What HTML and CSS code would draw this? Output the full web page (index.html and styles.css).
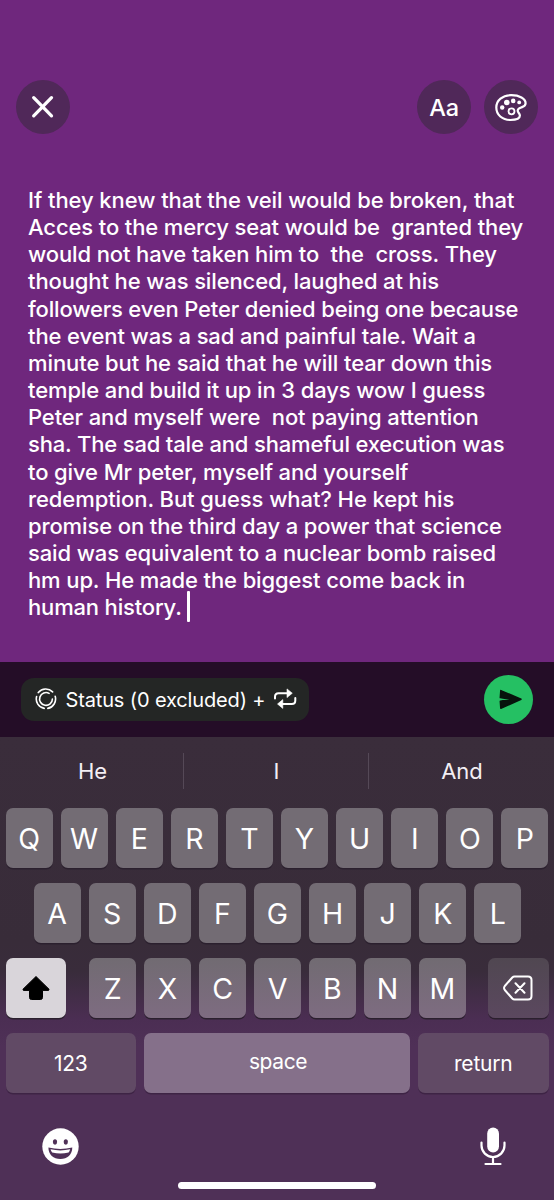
FILE: index.html
```html
<!DOCTYPE html>
<html lang="en">
<head>
<meta charset="utf-8">
<title>Text status</title>
<link rel="stylesheet" href="styles.css">
</head>
<body>
<main class="screen">
  <header class="toolbar">
    <button class="round" aria-label="Close"><svg width="54" height="54" viewBox="0 0 54 54"><path d="M17.7 17.7 35.5 35.8M35.5 17.7 17.7 35.8" fill="none" stroke="#fff" stroke-width="3.3" stroke-linecap="round"/></svg></button>
    <div class="tools">
      <button class="round font-btn">Aa</button>
      <button class="round" aria-label="Colour"><svg width="54" height="54" viewBox="0 0 54 54"><path d="M27.2 15.2C18.5 15.2 12.3 20.4 12.3 27.6c0 7.3 6 12.4 14 12.4 5.600 0 9.600-1.700 9.600-4.400 0-2.200-2.200-3-2.200-5 0-2.300 1.900-2.600 4.300-3.500 2.200-.8 3.600-2 3.600-3.900 0-4.600-6.100-8-14.400-8Z" fill="none" stroke="#fff" stroke-width="2.200"/><g fill="#fff"><circle cx="18.200" cy="27.500" r="2.200"/><circle cx="22.800" cy="22.500" r="2.800"/><circle cx="29.200" cy="20.900" r="2.300"/><circle cx="35.200" cy="22.400" r="1.900"/></g><circle cx="27.500" cy="31.300" r="3" fill="none" stroke="#fff" stroke-width="1.800"/></svg></button>
    </div>
  </header>

  <section class="editor">
    <p class="message">
      <span class="line loose">If they knew that the veil would be broken, that</span>
      <span class="line">Acces to the mercy seat would be  granted they</span>
      <span class="line">would not have taken him to  the  cross. They</span>
      <span class="line">thought he was silenced, laughed at his</span>
      <span class="line tight">followers even Peter denied being one because</span>
      <span class="line">the event was a sad and painful tale. Wait a</span>
      <span class="line loose">minute but he said that he will tear down this</span>
      <span class="line">temple and build it up in 3 days wow I guess</span>
      <span class="line">Peter and myself were  not paying attention</span>
      <span class="line tight">sha. The sad tale and shameful execution was</span>
      <span class="line">to give Mr peter, myself and yourself</span>
      <span class="line loose">redemption. But guess what? He kept his</span>
      <span class="line">promise on the third day a power that science</span>
      <span class="line">said was equivalent to a nuclear bomb raised</span>
      <span class="line">hm up. He made the biggest come back in</span>
      <span class="line tight">human history.<i class="caret"></i></span>
    </p>
  </section>

  <section class="audience">
    <button class="pill">
      <svg width="22" height="22" viewBox="0 0 22 22" fill="none" stroke="#fff" stroke-width="1.600" stroke-linecap="round"><path d="M3.300 4.600A9.600 9.600 0 0 1 17.600 3.900M20.200 8.300A9.600 9.600 0 0 1 12.800 20.400M9.200 20.400A9.600 9.600 0 0 1 1.600 8.500"/><path d="M14.100 5.400A6.400 6.400 0 1 0 17.400 11"/></svg>
      <span class="pill-text">Status (0 excluded) +</span>
      <svg width="24" height="22" viewBox="0 0 24 22"><path d="M2 10.500V8.700Q2 5.200 5.500 5.200H15M22.300 10V12.500Q22.300 16 18.800 16H9" fill="none" stroke="#fff" stroke-width="2" stroke-linecap="round"/><path d="M14 .9 19.300 5.200 14 9.600ZM9.800 11.600 4.500 16 9.800 20.400Z" fill="#fff" stroke="#fff" stroke-width=".6" stroke-linejoin="round"/></svg>
    </button>
    <button class="send" aria-label="Send"><svg width="49" height="49" viewBox="0 0 49 49"><path d="M16.800 15.600 37 24.200 16.800 33.300 16.300 26.200 26.500 24.300 16.300 22.600Z" fill="#07130c" stroke="#07130c" stroke-width="1.500" stroke-linejoin="round"/></svg></button>
  </section>

  <section class="keyboard">
    <div class="suggestions"><span>He</span><span>I</span><span>And</span></div>
    <div class="rows">
      <div class="row"><b class="key">Q</b><b class="key">W</b><b class="key">E</b><b class="key">R</b><b class="key">T</b><b class="key">Y</b><b class="key">U</b><b class="key">I</b><b class="key">O</b><b class="key">P</b></div>
      <div class="row middle"><b class="key">A</b><b class="key">S</b><b class="key">D</b><b class="key">F</b><b class="key">G</b><b class="key">H</b><b class="key">J</b><b class="key">K</b><b class="key">L</b></div>
      <div class="row lower">
        <b class="key shift"><svg width="30" height="26" viewBox="0 0 30 26"><path d="M15 1.500 28 14.200Q28.500 15.300 27 15.400H21.500V22.500Q21.500 24.500 19.500 24.500H10.500Q8.500 24.500 8.500 22.500V15.400H3Q1.500 15.300 2 14.200Z" fill="#000" stroke="#000" stroke-linejoin="round"/></svg></b>
        <div class="letters"><b class="key">Z</b><b class="key">X</b><b class="key">C</b><b class="key">V</b><b class="key">B</b><b class="key">N</b><b class="key">M</b></div>
        <b class="key dark delete"><svg width="30" height="26" viewBox="0 0 30 26" fill="none" stroke="#fff" stroke-width="2" stroke-linecap="round" stroke-linejoin="round"><path d="M11.500 1.500H25Q28.500 1.500 28.500 5V21Q28.500 24.500 25 24.500H11.500Q10.300 24.500 9.300 23.500L1.800 15Q.3 13 1.800 11L9.300 2.500Q10.300 1.500 11.500 1.500ZM12.500 8.300 21.500 17.700M21.500 8.300 12.500 17.700"/></svg></b>
      </div>
      <div class="row bottom"><b class="key dark word">123</b><b class="key word space">space</b><b class="key dark word">return</b></div>
    </div>
    <div class="dock">
      <svg width="37" height="37" viewBox="0 0 37 37"><circle cx="18.500" cy="18.500" r="18.200" fill="#fff"/><g fill="#4f3057"><ellipse cx="13" cy="14" rx="2.100" ry="2.700"/><ellipse cx="23.800" cy="14" rx="2.100" ry="2.700"/><path d="M6.400 19.500Q18.400 22.300 30.300 19.500C30.300 26.500 25.300 31 18.400 31S6.400 26.500 6.400 19.500Z"/></g><path d="M8.500 21.300Q18.400 23.600 28.200 21.300 27.500 23.600 26.600 24.500 18.400 26.400 10.200 24.500 9 23 8.500 21.300Z" fill="#fff"/></svg>
      <svg width="26" height="39" viewBox="0 0 26 39"><rect x="7.200" y=".5" width="11.800" height="25" rx="5.900" fill="#fff"/><path d="M1.500 15.500V18.500a11.500 11.500 0 0 0 23 0V15.500M13 30V37M5.500 37H20.500" fill="none" stroke="#fff" stroke-width="2.200" stroke-linecap="round"/></svg>
    </div>
    <div class="home"></div>
  </section>
</main>
</body>
</html>
```

FILE: styles.css
```css
* { box-sizing: border-box; }
body { margin: 0; background: #6f277d; font-family: Inter, "Liberation Sans", sans-serif; color: #fff; }
button { border: 0; padding: 0; margin: 0; color: inherit; font: inherit; }
svg { display: block; flex: none; }
.screen { width: 554px; height: 1200px; display: flex; flex-direction: column; overflow: hidden; background: #6f277d; }

.toolbar { display: flex; justify-content: space-between; padding: 80px 16px 0; height: 186px; }
.tools { display: flex; gap: 13px; height: 54px; }
.round { width: 54px; height: 54px; border-radius: 50%; background: #502859; display: flex; align-items: center; justify-content: center; }
.toolbar .font-btn { font-size: 23.500px; font-weight: 450; letter-spacing: -.2px; }

.editor { height: 475.500px; padding: 1px 0 0 28px; }
.message { margin: 0; font-size: 22px; font-weight: 500; line-height: 27.150px; letter-spacing: -.12px; }
.line { display: block; white-space: pre; }
.loose { letter-spacing: -.08px; }
.tight { letter-spacing: -.17px; }
.caret { display: inline-block; width: 3px; height: 31px; margin: -13px 0 -8px 5px; vertical-align: 1px; border-radius: 1px; background: #fff; }

.audience { height: 75.500px; padding: 0 21px; display: flex; align-items: center; justify-content: space-between; background: #240d27; }
.pill { width: 288px; height: 43px; padding: 0 12px 0 14px; border-radius: 13px; background: #242625; display: flex; align-items: center; }
.pill-text { flex: 1; margin-left: 8.500px; padding-top: 2px; text-align: left; font-size: 20px; letter-spacing: -.14px; white-space: nowrap; }
.send { width: 49px; height: 49px; border-radius: 50%; background: #25c063; }

.keyboard { height: 463px; background: linear-gradient(#3a2d3b 0, #382c39 205px, #392c3b 235px, #4b2e53 282px, #4f3057 310px, #4f3057 100%); }
.suggestions { height: 70.500px; padding-top: 16px; display: grid; grid-template-columns: 183px 185px 186px; }
.suggestions span { height: 36px; display: flex; align-items: center; justify-content: center; font-size: 22px; color: #f3eff4; }
.suggestions span:first-child { padding-left: 2px; }
.suggestions span + span { border-left: 1px solid #554957; padding-left: 1px; }
.rows { display: flex; flex-direction: column; gap: 15px; padding: 0 5.500px; }
.row { height: 60px; display: flex; gap: 8px; }
.middle { padding: 0 27px 0 28px; }
.key { flex: 1; height: 60px; padding-top: 1px; border-radius: 7px; background: #736c74; box-shadow: 0 1.500px 0 #2b202e; display: flex; align-items: center; justify-content: center; font-weight: 400; font-size: 28.500px; }
.lower { justify-content: space-between; gap: 0; }
.letters { display: flex; gap: 8.200px; width: 376.500px; margin-left: 1px; }
.lower .letters .key { background: linear-gradient(#716b72, #7e6c81); }
.lower .shift { flex: 0 0 60.500px; background: #d9d5da; }
.lower .delete { flex: 0 0 60.500px; background: linear-gradient(#504751, #5b485f); }
.dark { background: #614a65; }
.word { font-size: 21px; flex: 0 0 130.500px; letter-spacing: -.2px; }
.space { flex: 1; background: #85708a; padding: 0 0 2px 2px; letter-spacing: -.4px; }
.bottom .word { box-shadow: 0 1.500px 0 #3e2445; }
.dock { display: flex; justify-content: space-between; align-items: center; height: 39px; margin: 34px 48px 0 42px; }
.home { width: 198px; height: 7px; margin: 16.500px auto 0; border-radius: 4px; background: #fff; }
```
